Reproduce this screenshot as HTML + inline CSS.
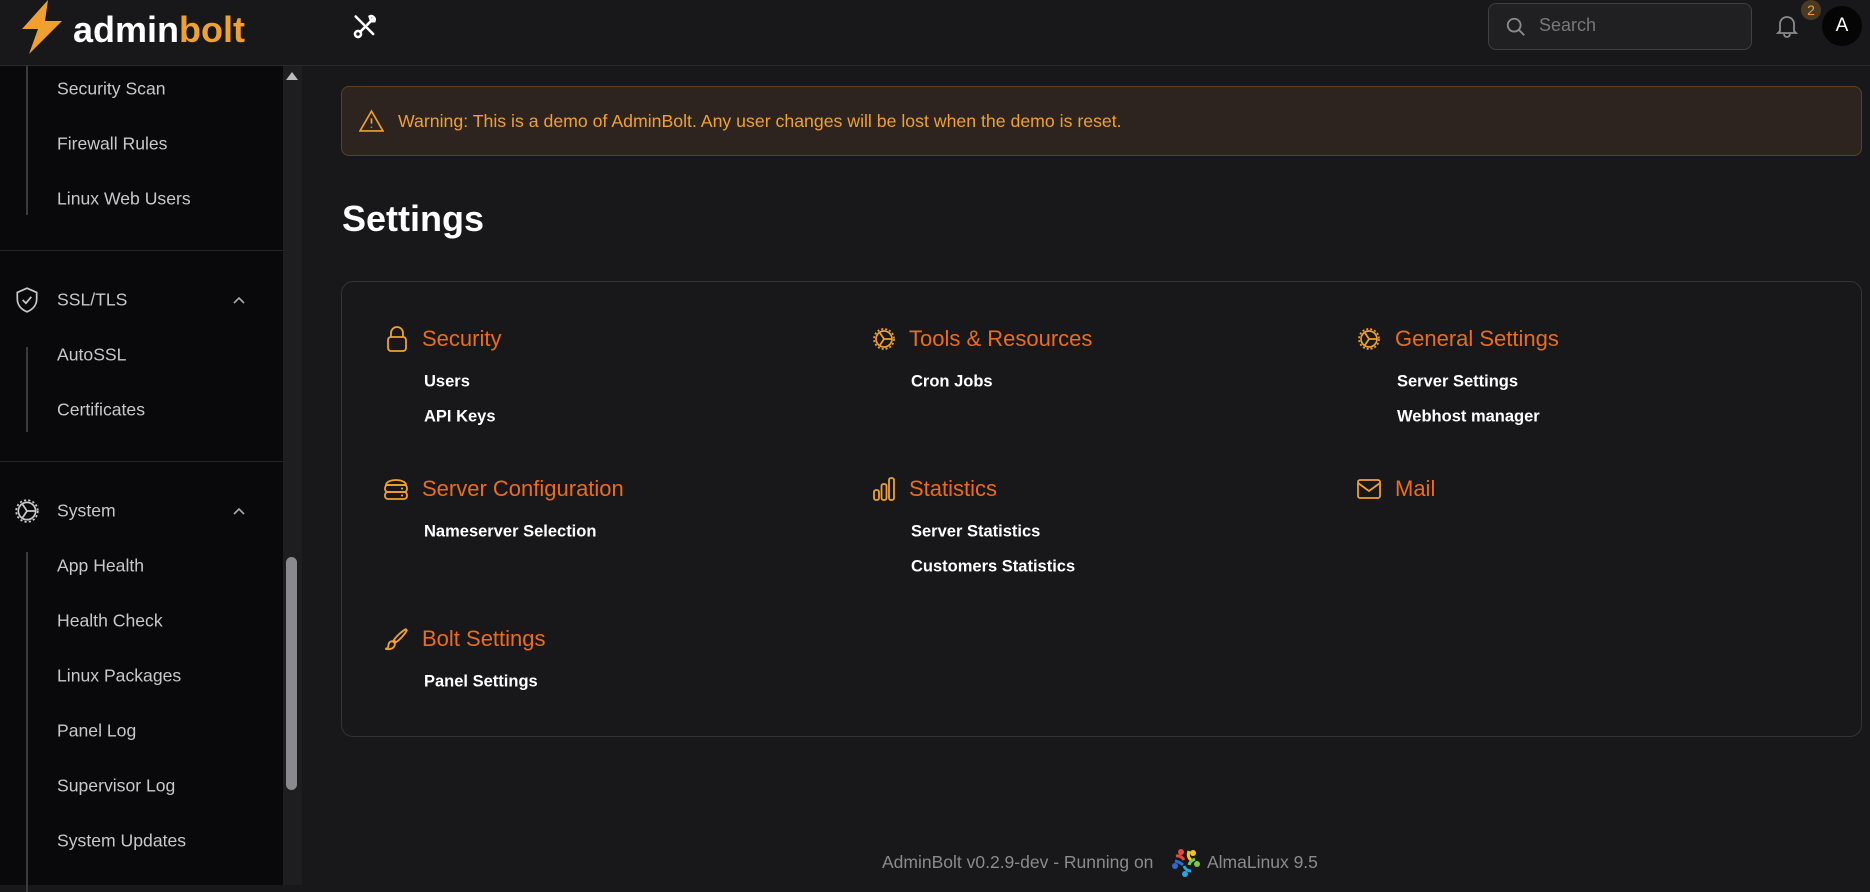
<!DOCTYPE html>
<html><head><meta charset="utf-8"><style>
*{margin:0;padding:0;box-sizing:border-box}
body{width:1870px;height:885px;overflow:hidden;background:#18181b;font-family:"Liberation Sans",sans-serif;position:relative}
.a{position:absolute}
.hdr{left:0;top:0;width:1870px;height:66px;background:#18181b;border-bottom:1px solid #2a2a2e}
.side{left:0;top:66px;width:283px;height:819px;background:#09090b}
.sb{left:283px;top:66px;width:19px;height:819px;background:#1e1e21}
.si{position:absolute;left:57px;color:#c8c8cc;font-size:17.6px;transform:translateY(-50%)}
.vl{position:absolute;left:26px;width:2px;background:#3a3a3e}
.dv{position:absolute;left:0;width:283px;height:1px;background:#26262a}
.ct{position:absolute;color:#ea6c1c;font-size:22px;transform:translateY(-50%)}
.ci{position:absolute;color:#fff;font-size:16.5px;font-weight:bold;transform:translateY(-50%)}
.ic{position:absolute;transform:translateY(-50%)}
</style></head><body>
<div class="a hdr"></div>
<svg class="a" style="left:20px;top:0" width="44" height="56" viewBox="0 0 44 56"><path d="M28 0 L2 29 L18 29 L9 54 L42 21 L25 21 Z" fill="#f0a030"/></svg>
<div class="a" style="left:73px;top:9px;font-size:36px;font-weight:bold;color:#fff;letter-spacing:0px">admin<span style="color:#f0a030">bolt</span></div>
<svg class="a" style="left:351px;top:13px" width="28" height="28" viewBox="0 0 24 24" fill="none" stroke="#fff" stroke-width="2.2" stroke-linecap="round"><path d="M4 3l3 3M7 6l12 12"/><circle cx="6" cy="18" r="2.6"/><path d="M8 16l4-4M14 10l5-5M16 3a3 3 0 0 1 4 4l-2 0-1-1z"/></svg>
<div class="a" style="left:1488px;top:3px;width:264px;height:47px;border:1px solid #3f3f44;border-radius:8px;background:#202023"></div>
<svg class="a" style="left:1505px;top:16px" width="22" height="22" viewBox="0 0 24 24" fill="none" stroke="#8a8a90" stroke-width="2"><circle cx="10" cy="10" r="7"/><path d="M15 15l6 6"/></svg>
<div class="a" style="left:1539px;top:15px;font-size:18px;color:#77777c">Search</div>
<svg class="a" style="left:1775px;top:13px" width="24" height="26" viewBox="0 0 24 26" fill="none" stroke="#8a8a90" stroke-width="1.8"><path d="M5 18V11a7 7 0 0 1 14 0v7l2 2H3z M9 21a3 3 0 0 0 6 0"/></svg>
<div class="a" style="left:1801px;top:0px;width:20px;height:20px;border-radius:10px;background:#4a3a24;color:#f0a030;font-size:14px;text-align:center;line-height:20px">2</div>
<div class="a" style="left:1822px;top:6px;width:40px;height:40px;border-radius:20px;background:#050505;color:#fff;font-size:19px;text-align:center;line-height:40px">A</div>

<div class="a side">
<div class="vl" style="top:0;height:149px"></div>
<div class="si" style="top:23px">Security Scan</div>
<div class="si" style="top:78px">Firewall Rules</div>
<div class="si" style="top:133px">Linux Web Users</div>
<div class="dv" style="top:184px"></div>
<svg class="ic" style="left:14px;top:234px" width="26" height="28" viewBox="0 0 24 26" fill="none" stroke="#c8c8cc" stroke-width="1.6"><path d="M12 2l9 4v6c0 6-4 10-9 12C7 22 3 18 3 12V6z"/><path d="M8 13l3 3 5-6"/></svg>
<div class="si" style="top:234px">SSL/TLS</div>
<svg class="ic" style="left:232px;top:234px" width="14" height="10" viewBox="0 0 14 10" fill="none" stroke="#aaa" stroke-width="1.6"><path d="M2 8l5-5 5 5"/></svg>
<div class="vl" style="top:281px;height:85px"></div>
<div class="si" style="top:289px">AutoSSL</div>
<div class="si" style="top:344px">Certificates</div>
<div class="dv" style="top:395px"></div>
<svg class="ic" style="left:14px;top:445px" width="26" height="26" viewBox="0 0 24 24" fill="none" stroke="#c8c8cc" stroke-width="1.6"><circle cx="12" cy="12" r="8"/><circle cx="12" cy="12" r="10" stroke-dasharray="2 2"/><path d="M12 12l-4-6M12 12l-4 6M12 12h8"/></svg>
<div class="si" style="top:445px">System</div>
<svg class="ic" style="left:232px;top:445px" width="14" height="10" viewBox="0 0 14 10" fill="none" stroke="#aaa" stroke-width="1.6"><path d="M2 8l5-5 5 5"/></svg>
<div class="vl" style="top:486px;height:340px"></div>
<div class="si" style="top:500px">App Health</div>
<div class="si" style="top:555px">Health Check</div>
<div class="si" style="top:610px">Linux Packages</div>
<div class="si" style="top:665px">Panel Log</div>
<div class="si" style="top:720px">Supervisor Log</div>
<div class="si" style="top:775px">System Updates</div>
</div>
<div class="a sb"></div>
<div class="a" style="left:286px;top:72px;width:0;height:0;border-left:6px solid transparent;border-right:6px solid transparent;border-bottom:8px solid #bbb"></div>
<div class="a" style="left:286px;top:557px;width:11px;height:233px;border-radius:6px;background:#8a8a8e"></div>

<div class="a" style="left:341px;top:86px;width:1521px;height:70px;border:1px solid #5a4220;border-radius:8px;background:#2e241f"></div>
<svg class="a" style="left:359px;top:109px" width="25" height="23" viewBox="0 0 24 22" fill="none" stroke="#f0a030" stroke-width="1.6"><path d="M12 2L1 21h22z M12 9v5 M12 17v1"/></svg>
<div class="a" style="left:398px;top:111px;font-size:17.7px;color:#f0a030">Warning: This is a demo of AdminBolt. Any user changes will be lost when the demo is reset.</div>
<div class="a" style="left:342px;top:198px;font-size:36px;font-weight:bold;color:#fff">Settings</div>

<div class="a" style="left:341px;top:281px;width:1521px;height:456px;border:1px solid #333338;border-radius:12px"></div>

<svg class="ic" style="left:385px;top:339px" width="24" height="28" viewBox="0 0 24 28" fill="none" stroke="#f0a030" stroke-width="1.8"><path d="M6 12V8a6 6 0 0 1 12 0v4"/><rect x="3" y="12" width="18" height="14" rx="3"/></svg>
<div class="ct" style="left:422px;top:339px">Security</div>
<div class="ci" style="left:424px;top:382px">Users</div>
<div class="ci" style="left:424px;top:417px">API Keys</div>

<svg class="ic" style="left:872px;top:339px" width="24" height="24" viewBox="0 0 24 24" fill="none" stroke="#f0a030" stroke-width="1.7"><circle cx="12" cy="12" r="8"/><circle cx="12" cy="12" r="10" stroke-dasharray="2 2"/><path d="M12 12l-4-6M12 12l-4 6M12 12h8"/></svg>
<div class="ct" style="left:909px;top:339px">Tools &amp; Resources</div>
<div class="ci" style="left:911px;top:382px">Cron Jobs</div>

<svg class="ic" style="left:1357px;top:339px" width="24" height="24" viewBox="0 0 24 24" fill="none" stroke="#f0a030" stroke-width="1.7"><circle cx="12" cy="12" r="8"/><circle cx="12" cy="12" r="10" stroke-dasharray="2 2"/><path d="M12 12l-4-6M12 12l-4 6M12 12h8"/></svg>
<div class="ct" style="left:1395px;top:339px">General Settings</div>
<div class="ci" style="left:1397px;top:382px">Server Settings</div>
<div class="ci" style="left:1397px;top:417px">Webhost manager</div>

<svg class="ic" style="left:383px;top:489px" width="26" height="24" viewBox="0 0 26 24" fill="none" stroke="#f0a030" stroke-width="1.8"><path d="M3 8a10 5 0 0 1 20 0v0H3z"/><rect x="2" y="8" width="22" height="7" rx="3"/><rect x="2" y="15" width="22" height="7" rx="3"/><path d="M18 11.5h2M18 18.5h2"/></svg>
<div class="ct" style="left:422px;top:489px">Server Configuration</div>
<div class="ci" style="left:424px;top:532px">Nameserver Selection</div>

<svg class="ic" style="left:872px;top:489px" width="24" height="26" viewBox="0 0 24 26" fill="none" stroke="#f0a030" stroke-width="1.8"><rect x="2" y="14" width="5" height="10" rx="2"/><rect x="9.5" y="8" width="5" height="16" rx="2"/><rect x="17" y="2" width="5" height="22" rx="2"/></svg>
<div class="ct" style="left:909px;top:489px">Statistics</div>
<div class="ci" style="left:911px;top:532px">Server Statistics</div>
<div class="ci" style="left:911px;top:567px">Customers Statistics</div>

<svg class="ic" style="left:1356px;top:489px" width="26" height="22" viewBox="0 0 26 22" fill="none" stroke="#f0a030" stroke-width="1.8"><rect x="2" y="2" width="22" height="18" rx="2"/><path d="M2 5l11 8 11-8"/></svg>
<div class="ct" style="left:1395px;top:489px">Mail</div>

<svg class="ic" style="left:383px;top:639px" width="26" height="26" viewBox="0 0 24 24" fill="none" stroke="#f0a030" stroke-width="1.7"><path d="M21 3c-4 2-9 7-11 10l2 2c3-2 8-7 10-11z"/><path d="M9 14c-3 0-4 2-4 4s-1 3-3 3c4 1 9 0 9-5z"/></svg>
<div class="ct" style="left:422px;top:639px">Bolt Settings</div>
<div class="ci" style="left:424px;top:682px">Panel Settings</div>

<div class="a" style="left:882px;top:852px;font-size:17.5px;color:#8a8a8f">AdminBolt v0.2.9-dev - Running on</div>
<svg class="a" style="left:1171px;top:847px" width="30" height="30" viewBox="0 0 30 30"><circle cx="10" cy="5" r="3" fill="#e8463a"/><path d="M5 9q5-1 8 4" stroke="#e8463a" stroke-width="3" fill="none"/><circle cx="22" cy="6" r="3" fill="#f5c518"/><path d="M18 4q-2 6 2 9" stroke="#f5c518" stroke-width="3" fill="none"/><circle cx="26" cy="17" r="3" fill="#7ac943"/><path d="M24 12q-5 2-6 6" stroke="#7ac943" stroke-width="3" fill="none"/><circle cx="14" cy="27" r="3" fill="#24a8e0"/><path d="M20 24q-5 0-7-5" stroke="#24a8e0" stroke-width="3" fill="none"/><circle cx="4" cy="19" r="3" fill="#2a6bd1"/><path d="M4 14q5 1 8 4" stroke="#2a6bd1" stroke-width="3" fill="none"/></svg>
<div class="a" style="left:1207px;top:852px;font-size:17.5px;color:#8a8a8f">AlmaLinux 9.5</div>
</body></html>
